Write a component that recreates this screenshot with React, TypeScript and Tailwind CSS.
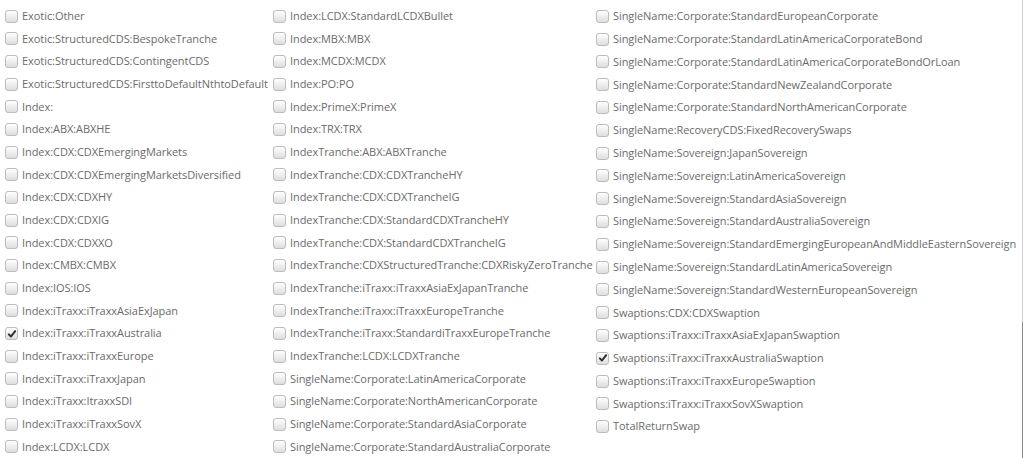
const col1 = [
	"Exotic:Other",
	"Exotic:StructuredCDS:BespokeTranche",
	"Exotic:StructuredCDS:ContingentCDS",
	"Exotic:StructuredCDS:FirsttoDefaultNthtoDefault",
	"Index:",
	"Index:ABX:ABXHE",
	"Index:CDX:CDXEmergingMarkets",
	"Index:CDX:CDXEmergingMarketsDiversified",
	"Index:CDX:CDXHY",
	"Index:CDX:CDXIG",
	"Index:CDX:CDXXO",
	"Index:CMBX:CMBX",
	"Index:IOS:IOS",
	"Index:iTraxx:iTraxxAsiaExJapan",
	"Index:iTraxx:iTraxxAustralia",
	"Index:iTraxx:iTraxxEurope",
	"Index:iTraxx:iTraxxJapan",
	"Index:iTraxx:ItraxxSDI",
	"Index:iTraxx:iTraxxSovX",
	"Index:LCDX:LCDX",
]

const col2 = [
	"Index:LCDX:StandardLCDXBullet",
	"Index:MBX:MBX",
	"Index:MCDX:MCDX",
	"Index:PO:PO",
	"Index:PrimeX:PrimeX",
	"Index:TRX:TRX",
	"IndexTranche:ABX:ABXTranche",
	"IndexTranche:CDX:CDXTrancheHY",
	"IndexTranche:CDX:CDXTrancheIG",
	"IndexTranche:CDX:StandardCDXTrancheHY",
	"IndexTranche:CDX:StandardCDXTrancheIG",
	"IndexTranche:CDXStructuredTranche:CDXRiskyZeroTranche",
	"IndexTranche:iTraxx:iTraxxAsiaExJapanTranche",
	"IndexTranche:iTraxx:iTraxxEuropeTranche",
	"IndexTranche:iTraxx:StandardiTraxxEuropeTranche",
	"IndexTranche:LCDX:LCDXTranche",
	"SingleName:Corporate:LatinAmericaCorporate",
	"SingleName:Corporate:NorthAmericanCorporate",
	"SingleName:Corporate:StandardAsiaCorporate",
	"SingleName:Corporate:StandardAustraliaCorporate",
]

const col3 = [
	"SingleName:Corporate:StandardEuropeanCorporate",
	"SingleName:Corporate:StandardLatinAmericaCorporateBond",
	"SingleName:Corporate:StandardLatinAmericaCorporateBondOrLoan",
	"SingleName:Corporate:StandardNewZealandCorporate",
	"SingleName:Corporate:StandardNorthAmericanCorporate",
	"SingleName:RecoveryCDS:FixedRecoverySwaps",
	"SingleName:Sovereign:JapanSovereign",
	"SingleName:Sovereign:LatinAmericaSovereign",
	"SingleName:Sovereign:StandardAsiaSovereign",
	"SingleName:Sovereign:StandardAustraliaSovereign",
	"SingleName:Sovereign:StandardEmergingEuropeanAndMiddleEasternSovereign",
	"SingleName:Sovereign:StandardLatinAmericaSovereign",
	"SingleName:Sovereign:StandardWesternEuropeanSovereign",
	"Swaptions:CDX:CDXSwaption",
	"Swaptions:iTraxx:iTraxxAsiaExJapanSwaption",
	"Swaptions:iTraxx:iTraxxAustraliaSwaption",
	"Swaptions:iTraxx:iTraxxEuropeSwaption",
	"Swaptions:iTraxx:iTraxxSovXSwaption",
	"TotalReturnSwap",
]

const checked = new Set(["Index:iTraxx:iTraxxAustralia", "Swaptions:iTraxx:iTraxxAustraliaSwaption"])

function Box({on}: {on: boolean}) {
	return (
		<span className="relative flex h-[13px] w-[13px] shrink-0 items-center justify-center rounded-[3px] border border-[#bcbcbc] bg-gradient-to-b from-[#ffffff] to-[#dedede]">
			{on && (
				<svg viewBox="0 0 12 12" className="h-[10px] w-[10px]">
					<path d="M2.2 6.4 L4.8 9 L9.8 2.6" fill="none" stroke="#2e2e2e" strokeWidth="2.4" strokeLinecap="round" strokeLinejoin="round" />
				</svg>
			)}
		</span>
	)
}

function Column({items, width}: {items: string[]; width: string}) {
	return (
		<div className={`flex shrink-0 flex-col ${width}`}>
			{items.map((label) => (
				<label key={label} className="flex h-[22.8px] items-center gap-[4px] whitespace-nowrap">
					<Box on={checked.has(label)} />
					<span>{label}</span>
				</label>
			))}
		</div>
	)
}

export default function App() {
	return (
		<div className="flex h-[458px] w-[1024px] overflow-hidden bg-white text-[11px] tracking-[-0.06px] text-[#6b6b6b]" style={{fontFamily: '"Open Sans", sans-serif'}}>
			<div className="flex flex-1 pl-[5px] pt-[5px]">
				<Column items={col1} width="w-[268px]" />
				<Column items={col2} width="w-[323px]" />
				<Column items={col3} width="flex-1" />
			</div>
			<div className="flex w-[2px] flex-col">
				<div className="h-[322px] w-px bg-[#d0d0d0]" />
				<div className="flex-1 w-px bg-[#8a8a8a]" />
			</div>
		</div>
	)
}
